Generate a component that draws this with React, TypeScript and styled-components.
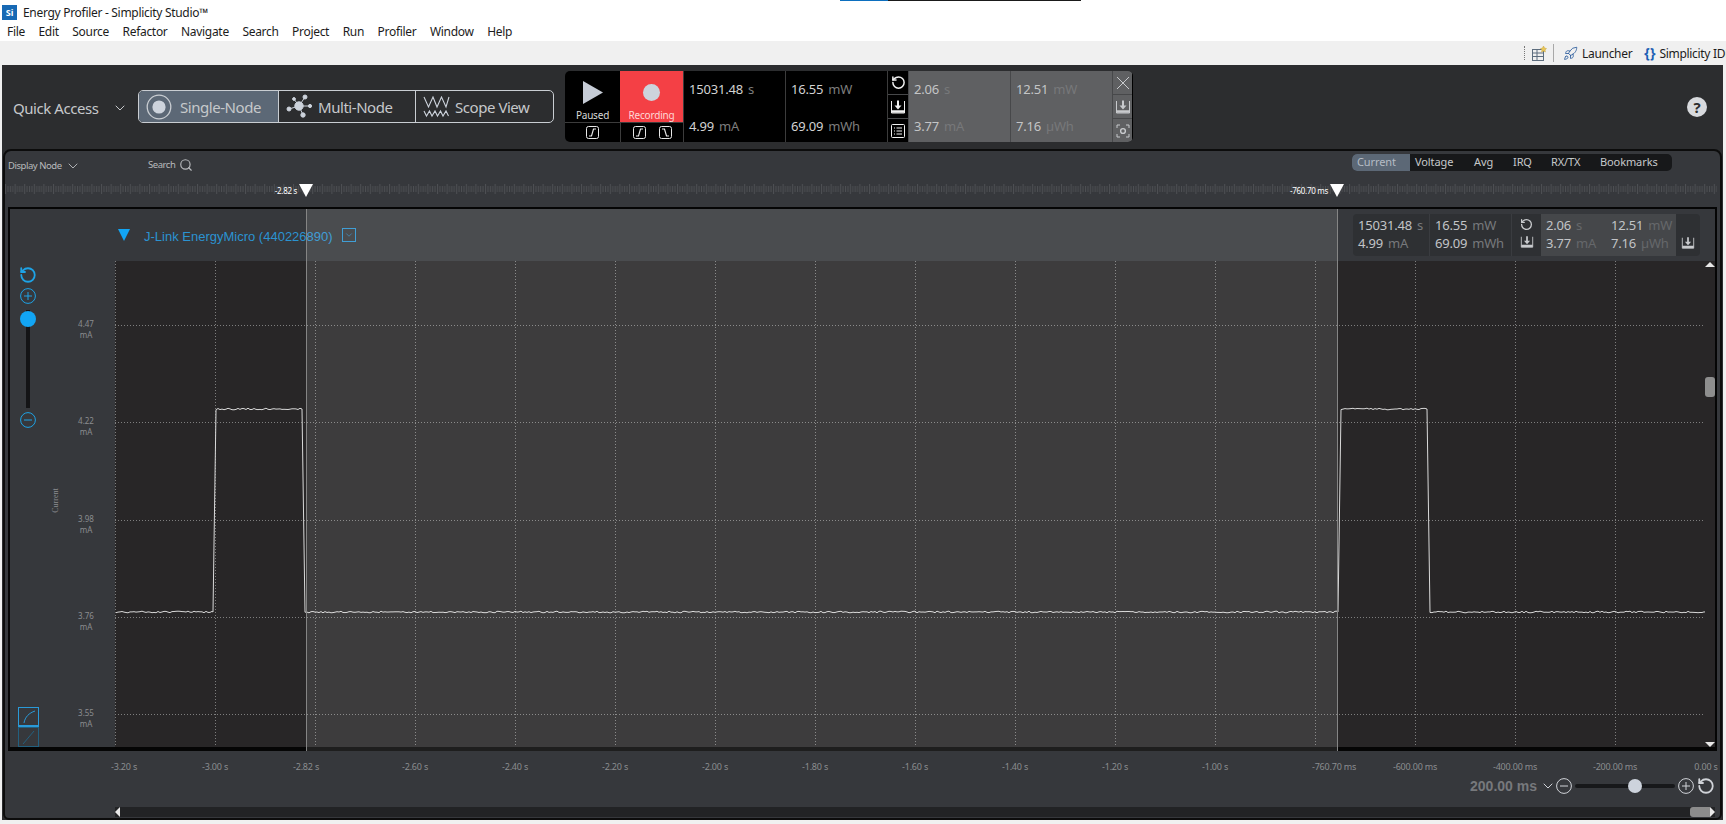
import React from 'react';
import styled, { createGlobalStyle } from 'styled-components';
import { Rocket, RotateCcw, Search, ChevronDown } from 'lucide-react';

const GlobalStyle = createGlobalStyle`
  html, body {
    margin: 0;
    height: 100%;
    overflow: hidden;
    background: #fff;
    font-family: "Noto Sans", "Open Sans", sans-serif;
  }
  * { box-sizing: border-box; }
`;

const Page = styled.div`
  position: relative;
  display: flex;
  flex-direction: column;
  width: 1726px;
  height: 824px;
  background: #f0f0f0;
  overflow: hidden;
`;

const TopStrip = styled.div`
  position: absolute;
  top: 0;
  left: 840px;
  width: 241px;
  height: 1px;
  background: linear-gradient(90deg, #0c6fbf 48px, #1a1a1a 48px);
`;

const TitleBar = styled.div`
  height: 22px;
  background: #fff;
  display: flex;
  align-items: center;
  padding: 2px 0 0 2px;
  gap: 6px;
`;

const AppLogo = styled.div`
  width: 15px;
  height: 15px;
  background: #1769b4;
  color: #fff;
  font-size: 9px;
  font-weight: 700;
  line-height: 15px;
  text-align: center;
`;

const WindowTitle = styled.div`
  font-size: 12px;
  letter-spacing: -0.3px;
  color: #1c1c1c;
`;

const MenuBar = styled.div`
  height: 19px;
  background: #fff;
  display: flex;
  align-items: center;
  gap: 13.5px;
  padding-left: 7px;
`;

const MenuItem = styled.span`
  font-size: 12px;
  letter-spacing: -0.3px;
  color: #1c1c1c;
`;

const ToolBar = styled.div`
  height: 24px;
  display: flex;
  align-items: center;
  background: #f0f0f0;
`;

const ToolGroup = styled.div`
  margin-left: auto;
  flex: 0 0 202px;
  width: 202px;
  display: flex;
  align-items: center;
  overflow: hidden;
  white-space: nowrap;
  font-size: 12px;
  letter-spacing: -0.3px;
  color: #1c1c1c;
  > * { flex: none; }
`;

const Grip = styled.div`
  width: 1px;
  height: 14px;
  margin-right: 7px;
  border-left: 1px dotted #777;
`;

const ToolDivider = styled.div`
  width: 1px;
  height: 18px;
  background: #a8a8a8;
  margin: 0 9px 0 6px;
`;

const ToolLabel = styled.span`
  margin-left: 4px;
`;

const Braces = styled.span`
  color: #1d5fb4;
  font-weight: 700;
  font-size: 14px;
  letter-spacing: 0;
  margin: -2px 4px 0 12px;
`;

const Main = styled.div`
  flex: 1;
  display: flex;
  flex-direction: column;
  margin: 0 3px 4px 2px;
  padding: 0 1px;
  background: #2c2d2f;
  min-height: 0;
`;

const TopBar = styled.div`
  height: 84px;
  flex: none;
  display: flex;
  align-items: center;
  padding: 0 15px 1px 10px;
`;

const QuickAccess = styled.div`
  display: flex;
  align-items: center;
  width: 125px;
  font-size: 15px;
  letter-spacing: -0.45px;
  color: #c6c8cb;
  gap: 14px;
  margin-top: 3px;
  svg { flex: none; }
`;

const ModeSwitch = styled.div`
  display: flex;
  height: 33px;
  border: 1px solid #c9cdd2;
  border-radius: 5px;
  overflow: hidden;
  margin-right: 11px;
`;

const ModeButton = styled.div<{ $active?: boolean; $width: number; $gap: number }>`
  width: ${p => p.$width}px;
  display: flex;
  align-items: center;
  gap: ${p => p.$gap}px;
  padding-left: 7px;
  font-size: 15px;
  letter-spacing: -0.45px;
  color: #c6c8cb;
  background: ${p => (p.$active ? '#5c6876' : 'transparent')};
  & + & { border-left: 1px solid #c9cdd2; }
  svg { flex: none; }
`;

const Meter = styled.div`
  display: flex;
  width: 568px;
  height: 71px;
  background: #000;
  border-radius: 5px;
  overflow: hidden;
`;

const RunGroup = styled.div`
  width: 118px;
  display: flex;
  flex-direction: column;
`;

const RunRow = styled.div`
  display: flex;
  height: 52px;
  border-bottom: 1px solid #3c3c3c;
`;

const RunButton = styled.div<{ $width: number; $on?: boolean }>`
  width: ${p => p.$width}px;
  display: flex;
  flex-direction: column;
  align-items: center;
  padding-top: 10px;
  gap: 4px;
  background: ${p => (p.$on ? '#f44045' : 'transparent')};
  color: ${p => (p.$on ? '#ffd7d7' : '#d8d8d8')};
  font-size: 10px;
  letter-spacing: -0.2px;
  line-height: 14px;
  svg { flex: none; }
`;

const EdgeRow = styled.div`
  flex: 1;
  display: flex;
`;

const EdgeCell = styled.div<{ $width: number }>`
  width: ${p => p.$width}px;
  display: flex;
  align-items: center;
  justify-content: space-around;
  padding: 0 5px;
  color: #e8e8e8;
  & + & { border-left: 1px solid #3c3c3c; }
`;

const StatColumn = styled.div<{ $dim?: boolean }>`
  width: 102px;
  display: flex;
  flex-direction: column;
  justify-content: space-between;
  padding: 9px 0 7px 5px;
  border-left: 1px solid ${p => (p.$dim ? '#47484a' : '#3c3c3c')};
  background: ${p => (p.$dim ? '#5f6062' : 'transparent')};
`;

const StatLine = styled.div`
  font-size: 13px;
  letter-spacing: -0.2px;
  line-height: 18px;
  white-space: nowrap;
`;

const StatValue = styled.span<{ $tone: string }>`
  color: ${p => p.$tone};
`;

const StatUnit = styled.span<{ $tone: string }>`
  color: ${p => p.$tone};
  margin-left: 5px;
`;

const IconColumn = styled.div<{ $width: number; $bg: string; $color: string }>`
  width: ${p => p.$width}px;
  display: flex;
  flex-direction: column;
  background: ${p => p.$bg};
  color: ${p => p.$color};
  border-left: 1px solid ${p => (p.$bg === '#000' ? '#3c3c3c' : '#47484a')};
`;

const IconCell = styled.div`
  flex: 1;
  display: flex;
  align-items: center;
  justify-content: center;
  & + & { border-top: 1px solid #47484a; }
`;

const HelpBadge = styled.div`
  margin-left: auto;
  width: 20px;
  height: 20px;
  border-radius: 50%;
  background: #d8dade;
  color: #2c2d2f;
  font-size: 15px;
  font-weight: 700;
  line-height: 20px;
  text-align: center;
`;

const Panel = styled.div`
  flex: 1;
  min-height: 0;
  display: flex;
  flex-direction: column;
  background: #36383c;
  border: 2px solid #0c0c0c;
  border-radius: 8px 8px 6px 6px;
`;

const PanelHead = styled.div`
  height: 32px;
  flex: none;
  display: flex;
  align-items: flex-start;
  font-size: 9.5px;
  letter-spacing: -0.45px;
  color: #b8babd;
`;

const HeadLabel = styled.div<{ $width: number; $gap: number }>`
  width: ${p => p.$width}px;
  display: flex;
  align-items: center;
  gap: ${p => p.$gap}px;
  padding: 7px 0 0 3px;
  line-height: 14px;
`;

const Tabs = styled.div`
  margin: 3px 48px 0 auto;
  display: flex;
  height: 17px;
  background: #17181a;
  border-radius: 5px;
  overflow: hidden;
`;

const Tab = styled.div<{ $width: number; $active?: boolean }>`
  width: ${p => p.$width}px;
  padding-left: 5px;
  font-size: 11px;
  line-height: 16px;
  letter-spacing: -0.1px;
  color: ${p => (p.$active ? '#b5bcc5' : '#c6c8cb')};
  background: ${p => (p.$active ? '#5c6876' : 'transparent')};
`;

const Ruler = styled.div`
  position: relative;
  height: 14px;
  flex: none;
  margin-right: 3px;
  svg { display: block; }
`;

const MarkerHead = styled.div<{ $x: number }>`
  position: absolute;
  top: 1px;
  left: ${p => p.$x}px;
  width: 0;
  height: 0;
  border-left: 7px solid transparent;
  border-right: 7px solid transparent;
  border-top: 13px solid #fff;
`;

const MarkerLabel = styled.div<{ $right: number }>`
  position: absolute;
  top: 2px;
  right: ${p => p.$right}px;
  font-size: 8px;
  line-height: 11px;
  letter-spacing: -0.3px;
  color: #fff;
`;

const ChartBox = styled.div`
  position: relative;
  flex: none;
  margin: 10px 3px 0;
  height: 544px;
  border: solid #050505;
  border-width: 2px 2px 4px;
  display: flex;
  flex-direction: column;
`;

const Selection = styled.div`
  position: absolute;
  top: 0;
  bottom: -4px;
  left: 296px;
  width: 1032px;
  background: rgba(255, 255, 255, 0.1);
  border: solid #858585;
  border-width: 0 1px;
`;

const ChartHeader = styled.div`
  height: 52px;
  flex: none;
  display: flex;
  align-items: center;
  background: #36383c;
  padding-left: 108px;
`;

const NodeName = styled.div`
  font-family: "Liberation Sans", Arial, sans-serif;
  font-size: 13px;
  color: #2b93d1;
  margin-left: 14px;
  margin-top: 3px;
`;

const NodeMenu = styled.div`
  width: 14px;
  height: 14px;
  margin: 0 0 0 9px;
  border: 1px solid #2b93d1;
  color: #2b93d1;
  display: flex;
  align-items: center;
  justify-content: center;
`;

const MiniReadout = styled.div`
  margin: 0 15px 0 auto;
  width: 347px;
  height: 42px;
  display: flex;
  border-radius: 4px;
  overflow: hidden;
  background: #2e3033;
`;

const MiniColumn = styled.div<{ $width: number; $bg?: string }>`
  width: ${p => p.$width}px;
  padding: 2px 0 0 5px;
  background: ${p => p.$bg ?? 'transparent'};
  border-right: 1px solid ${p => (p.$bg ? 'transparent' : '#3a3c40')};
`;

const MiniIcons = styled.div<{ $width: number; $alignEnd?: boolean }>`
  width: ${p => p.$width}px;
  display: flex;
  flex-direction: column;
  align-items: center;
  justify-content: ${p => (p.$alignEnd ? 'flex-end' : 'flex-start')};
  gap: 4px;
  padding: 4px 0 6px;
  color: #c8cacd;
`;

const ChartBody = styled.div`
  flex: 1;
  display: flex;
  min-height: 0;
`;

const Rail = styled.div`
  width: 105px;
  flex: none;
  display: flex;
  background: #36383c;
`;

const RailControls = styled.div`
  width: 36px;
  display: flex;
  flex-direction: column;
  align-items: center;
  gap: 4px;
  padding-top: 5px;
  color: #1ea3e6;
`;

const VerticalTrack = styled.div`
  position: relative;
  width: 4px;
  height: 98px;
  margin-top: 2px;
  background: #141416;
`;

const VerticalThumb = styled.div`
  position: absolute;
  top: 1px;
  left: -6px;
  width: 16px;
  height: 16px;
  border-radius: 50%;
  background: #12a5f4;
`;

const CurveButtons = styled.div`
  margin-top: auto;
  display: flex;
  flex-direction: column;
`;

const CurveButton = styled.div<{ $active?: boolean }>`
  width: 21px;
  height: 20px;
  border: 1px solid ${p => (p.$active ? '#2a9ad8' : '#23607f')};
  border-bottom-width: ${p => (p.$active ? 2 : 1)}px;
  color: ${p => (p.$active ? '#2a9ad8' : '#23607f')};
  display: flex;
`;

const YAxis = styled.div`
  position: relative;
  flex: 1;
`;

const YLabel = styled.div`
  position: absolute;
  left: 22px;
  width: 36px;
  font-size: 8px;
  line-height: 11px;
  text-align: center;
  color: #8b8d90;
`;

const YTitle = styled.div`
  position: absolute;
  left: -3px;
  top: 235px;
  font-family: "Liberation Serif", serif;
  font-size: 8px;
  color: #8b8d90;
  transform: rotate(-90deg);
`;

const Plot = styled.svg`
  display: block;
  flex: 1;
  background: #282627;
`;

const ScrollThumb = styled.div`
  position: absolute;
  top: 116px;
  right: 0;
  width: 10px;
  height: 20px;
  border-radius: 3px;
  background: #8e8e8e;
`;

const PlotWrap = styled.div`
  position: relative;
  flex: 1;
  display: flex;
  min-width: 0;
`;

const ScrollArrow = styled.div<{ $down?: boolean }>`
  position: absolute;
  right: 0;
  ${p => (p.$down ? 'bottom: 0;' : 'top: 1px;')}
  width: 0;
  height: 0;
  border-left: 5px solid transparent;
  border-right: 5px solid transparent;
  ${p => (p.$down ? 'border-top: 5px solid #e8e8e8;' : 'border-bottom: 5px solid #e8e8e8;')}
`;

const XAxis = styled.div`
  position: relative;
  height: 24px;
  flex: none;
`;

const XLabel = styled.div`
  position: absolute;
  top: 10px;
  font-size: 9px;
  line-height: 12px;
  letter-spacing: -0.2px;
  color: #8b8d90;
  white-space: nowrap;
  transform: translateX(-50%);
`;

const ZoomRow = styled.div`
  height: 22px;
  flex: none;
  display: flex;
  align-items: center;
  justify-content: flex-end;
  gap: 3px;
  padding-right: 5px;
  color: #d0d3d8;
  svg { flex: none; }
  > svg:nth-child(2) { margin-right: -3px; }
`;

const ZoomValue = styled.div`
  font-family: "Liberation Sans", Arial, sans-serif;
  font-size: 14px;
  font-weight: 700;
  color: #77797c;
`;

const ZoomTrack = styled.div`
  position: relative;
  width: 100px;
  height: 4px;
  border-radius: 2px;
  background: #17181a;
`;

const ZoomThumb = styled.div`
  position: absolute;
  top: -5px;
  left: 53px;
  width: 14px;
  height: 14px;
  border-radius: 50%;
  background: #cdd3dc;
`;

const HScroll = styled.div`
  position: relative;
  height: 10px;
  flex: none;
  margin: 10px 5px 0 110px;
  background: #222325;
`;

const HArrow = styled.div<{ $right?: boolean }>`
  position: absolute;
  top: 0;
  ${p => (p.$right ? 'right: 0;' : 'left: 0;')}
  width: 0;
  height: 0;
  border-top: 5px solid transparent;
  border-bottom: 5px solid transparent;
  ${p => (p.$right ? 'border-left: 5px solid #e8e8e8;' : 'border-right: 5px solid #e8e8e8;')}
`;

const HThumb = styled.div`
  position: absolute;
  top: 0;
  right: 5px;
  width: 20px;
  height: 10px;
  border-radius: 3px 0 0 3px;
  background: #8c8c8c;
`;

// --- little drawings

const SaveIcon = ({ size = 16 }: { size?: number }) => (
  <svg width={size} height={size} viewBox="0 0 16 16" fill="none" stroke="currentColor">
    <path d="M1.500 2v12h13V2" />
    <path d="M1.500 12.500h13" strokeWidth="2.500" />
    <path d="M8 1.500V7" strokeWidth="2" />
    <path d="M4.500 6.500h7L8 10.500z" fill="currentColor" stroke="none" />
  </svg>
);

const ListIcon = () => (
  <svg width="16" height="16" viewBox="0 0 16 16" fill="none" stroke="currentColor">
    <rect x="1.500" y="1.500" width="13" height="13" rx="1" />
    <path d="M4 5h1M6.500 5H12M4 8h1M6.500 8H12M4 11h1M6.500 11H12" />
  </svg>
);

const CloseIcon = () => (
  <svg width="16" height="16" viewBox="0 0 16 16" fill="none" stroke="currentColor">
    <path d="m2 2 12 12M14 2 2 14" />
  </svg>
);

const CaptureIcon = () => (
  <svg width="14" height="14" viewBox="0 0 14 14" fill="none" stroke="currentColor">
    <path d="M1 4V1h3M10 1h3v3M13 10v3h-3M4 13H1v-3" />
    <circle cx="7" cy="7" r="2.400" strokeWidth="1.400" />
  </svg>
);

const EdgeIcon = ({ falling }: { falling?: boolean }) => (
  <svg width="13" height="13" viewBox="0 0 13 13" fill="none" stroke="currentColor">
    <rect x="0.500" y="0.500" width="12" height="12" rx="2" />
    <path d={falling ? 'M3 3h2.500l2 7H10' : 'M3 10h2.500l2-7H10'} strokeWidth="1.200" />
  </svg>
);

const CircleSign = ({ plus, size = 16 }: { plus?: boolean; size?: number }) => (
  <svg width={size} height={size} viewBox="0 0 16 16" fill="none" stroke="currentColor">
    <circle cx="8" cy="8" r="7.400" />
    <path d={plus ? 'M4 8h8M8 4v8' : 'M4 8h8'} />
  </svg>
);

const NodeRing = () => (
  <svg width="26" height="26" viewBox="0 0 26 26">
    <circle cx="13" cy="13" r="11.800" fill="none" stroke="#c9cdd2" strokeWidth="1.300" />
    <circle cx="13" cy="13" r="6.600" fill="#cdd3dc" />
  </svg>
);

const MultiNode = () => (
  <svg width="27" height="27" viewBox="0 0 27 27" fill="#cdd3dc" stroke="#cdd3dc">
    <path d="M13 13 19 4M13 13 3 16M13 13l11 0M13 13l4 9M13 13 8 6" />
    <circle cx="13" cy="13" r="4.200" />
    <circle cx="19" cy="4" r="2" />
    <circle cx="3" cy="16" r="2" />
    <circle cx="24" cy="13" r="1.600" />
    <circle cx="17" cy="22" r="2.200" />
    <circle cx="8" cy="6" r="1.400" />
  </svg>
);

const ScopeWave = () => (
  <svg width="27" height="22" viewBox="0 0 27 22" fill="none" stroke="#cdd3dc" strokeWidth="1.100">
    <path d="M1 1l4.500 10L10 1l4 10 4.500-10 4.500 10L26 1" />
    <path d="M1 15l2.500 5 3-5 2.500 5 3-5 2.500 5 3-5 2.500 5 3-5 2.500 5" />
  </svg>
);

const TableIcon = () => (
  <svg width="15" height="15" viewBox="0 0 15 15" fill="none" stroke="#5d6d7e">
    <rect x="0.500" y="3.500" width="11" height="11" />
    <path d="M0.500 7h11M0.500 10.500h11M5 3.500v11" />
    <path d="m11.500 0 1 2 2 .6-1.500 1.400.4 2-1.900-1-1.900 1 .4-2L8.500 2.600l2-.6z" fill="#e8c65a" stroke="#c9a53a" strokeWidth=".5" />
  </svg>
);

const CurveIcon = ({ curved }: { curved?: boolean }) => (
  <svg width="19" height="18" viewBox="0 0 19 18" fill="none" stroke="currentColor">
    <path d={curved ? 'M5 15C6 9 10 5 16 3' : 'M4 16 15 3'} />
  </svg>
);

// --- chart data

const MENU = ['File', 'Edit', 'Source', 'Refactor', 'Navigate', 'Search', 'Project', 'Run', 'Profiler', 'Window', 'Help'];

const TABS = [
  { label: 'Current', width: 58, active: true },
  { label: 'Voltage', width: 59 },
  { label: 'Avg', width: 39 },
  { label: 'IRQ', width: 38 },
  { label: 'RX/TX', width: 49 },
  { label: 'Bookmarks', width: 77 },
];

const Y_LABELS = [
  { value: '4.47', y: 64 },
  { value: '4.22', y: 161 },
  { value: '3.98', y: 259 },
  { value: '3.76', y: 356 },
  { value: '3.55', y: 453 },
];

const X_LABELS = [
  { label: '-3.20 s', x: 119 },
  { label: '-3.00 s', x: 210 },
  { label: '-2.82 s', x: 301 },
  ...['-2.60', '-2.40', '-2.20', '-2.00', '-1.80', '-1.60', '-1.40', '-1.20', '-1.00'].map((label, i) => ({
    label: `${label} s`,
    x: 410 + i * 100,
  })),
  { label: '-760.70 ms', x: 1329 },
  { label: '-600.00 ms', x: 1410 },
  { label: '-400.00 ms', x: 1510 },
  { label: '-200.00 ms', x: 1610 },
  { label: '0.00 s', x: 1701 },
];

const noise = (i: number) => {
  const s = Math.sin(i * 12.9898) * 43758.5453;
  return (s - Math.floor(s) - 0.5) * 1.6;
};

const traceRun = (from: number, to: number, level: number) => {
  const pts: string[] = [];
  for (let x = from; x < to; x += 2) {
    pts.push(`${x},${(level + noise(x)).toFixed(1)}`);
  }
  pts.push(`${to},${level}`);
  return pts.join(' ');
};

const LOW = 351;
const HIGH = 148;
const TRACE = [
  traceRun(1, 98, LOW),
  traceRun(101, 187, HIGH),
  traceRun(190, 1223, LOW),
  traceRun(1226, 1312, HIGH),
  traceRun(1315, 1590, LOW),
].join(' ');

const Stat = ({ value, unit, dim }: { value: string; unit: string; dim?: boolean }) => (
  <StatLine>
    <StatValue $tone={dim ? '#c4c5c6' : '#d2d2d2'}>{value}</StatValue>
    <StatUnit $tone={dim ? '#77787a' : '#7d7d7d'}>{unit}</StatUnit>
  </StatLine>
);

const MiniStat = ({ value, unit, dim }: { value: string; unit: string; dim?: boolean }) => (
  <StatLine>
    <StatValue $tone="#c2c4c7">{value}</StatValue>
    <StatUnit $tone={dim ? '#66686b' : '#77797c'}>{unit}</StatUnit>
  </StatLine>
);

const App = () => {
  return (
    <Page>
      <GlobalStyle />
      <TopStrip />
      <TitleBar>
        <AppLogo>Si</AppLogo>
        <WindowTitle>Energy Profiler - Simplicity Studio™</WindowTitle>
      </TitleBar>
      <MenuBar>
        {MENU.map(item => (
          <MenuItem key={item}>{item}</MenuItem>
        ))}
      </MenuBar>
      <ToolBar>
        <ToolGroup>
          <Grip />
          <TableIcon />
          <ToolDivider />
          <Rocket size={15} color="#2f5f9e" strokeWidth={1.4} />
          <ToolLabel>Launcher</ToolLabel>
          <Braces>{'{}'}</Braces>
          <span>Simplicity IDE</span>
        </ToolGroup>
      </ToolBar>

      <Main>
        <TopBar>
          <QuickAccess>
            Quick Access
            <ChevronDown size={16} strokeWidth={1.5} />
          </QuickAccess>
          <ModeSwitch>
            <ModeButton $active $width={139} $gap={8}>
              <NodeRing />
              Single-Node
            </ModeButton>
            <ModeButton $width={137} $gap={5}>
              <MultiNode />
              Multi-Node
            </ModeButton>
            <ModeButton $width={138} $gap={5}>
              <ScopeWave />
              Scope View
            </ModeButton>
          </ModeSwitch>

          <Meter>
            <RunGroup>
              <RunRow>
                <RunButton $width={55}>
                  <svg width="20" height="23" viewBox="0 0 20 23">
                    <path d="M0 0 20 11.500 0 23z" fill="#c6ccd6" />
                  </svg>
                  Paused
                </RunButton>
                <RunButton $width={63} $on>
                  <svg width="23" height="23" viewBox="0 0 23 23">
                    <circle cx="11.500" cy="11.500" r="8.500" fill="#cdd3dc" />
                  </svg>
                  Recording
                </RunButton>
              </RunRow>
              <EdgeRow>
                <EdgeCell $width={55}>
                  <EdgeIcon />
                </EdgeCell>
                <EdgeCell $width={63}>
                  <EdgeIcon />
                  <EdgeIcon falling />
                </EdgeCell>
              </EdgeRow>
            </RunGroup>
            <StatColumn>
              <Stat value="15031.48" unit="s" />
              <Stat value="4.99" unit="mA" />
            </StatColumn>
            <StatColumn>
              <Stat value="16.55" unit="mW" />
              <Stat value="69.09" unit="mWh" />
            </StatColumn>
            <IconColumn $width={21} $bg="#000" $color="#f0f0f0">
              <IconCell>
                <RotateCcw size={15} strokeWidth={2.4} />
              </IconCell>
              <IconCell>
                <SaveIcon />
              </IconCell>
              <IconCell>
                <ListIcon />
              </IconCell>
            </IconColumn>
            <StatColumn $dim>
              <Stat dim value="2.06" unit="s" />
              <Stat dim value="3.77" unit="mA" />
            </StatColumn>
            <StatColumn $dim>
              <Stat dim value="12.51" unit="mW" />
              <Stat dim value="7.16" unit="µWh" />
            </StatColumn>
            <IconColumn $width={20} $bg="#5f6062" $color="#c8cacd">
              <IconCell>
                <CloseIcon />
              </IconCell>
              <IconCell>
                <SaveIcon />
              </IconCell>
              <IconCell>
                <CaptureIcon />
              </IconCell>
            </IconColumn>
          </Meter>
          <HelpBadge>?</HelpBadge>
        </TopBar>

        <Panel>
          <PanelHead>
            <HeadLabel $width={140} $gap={3}>
              Display Node
              <ChevronDown size={16} strokeWidth={1.4} />
            </HeadLabel>
            <HeadLabel $width={80} $gap={4}>
              Search
              <Search size={14} strokeWidth={2} />
            </HeadLabel>
            <Tabs>
              {TABS.map(t => (
                <Tab key={t.label} $width={t.width} $active={t.active}>
                  {t.label}
                </Tab>
              ))}
            </Tabs>
          </PanelHead>

          <Ruler>
            <svg width="100%" height="14">
              <defs>
                <pattern id="ticks" width="9.6" height="14" patternUnits="userSpaceOnUse">
                  <path d="M0.500 1v10M2.900 3v6M5.300 3v6M7.700 3v6" stroke="#4d4f53" />
                </pattern>
              </defs>
              <rect width="100%" height="14" fill="url(#ticks)" />
            </svg>
            <MarkerLabel $right={1420}>-2.82 s</MarkerLabel>
            <MarkerHead $x={294} />
            <MarkerLabel $right={389}>-760.70 ms</MarkerLabel>
            <MarkerHead $x={1325} />
          </Ruler>

          <ChartBox>
            <ChartHeader>
              <svg width="12" height="12" viewBox="0 0 12 12">
                <path d="M0 0h12L6 12z" fill="#12a5f4" />
              </svg>
              <NodeName>J-Link EnergyMicro (440226890)</NodeName>
              <NodeMenu>
                <ChevronDown size={10} strokeWidth={1.5} />
              </NodeMenu>
              <MiniReadout>
                <MiniColumn $width={77}>
                  <MiniStat value="15031.48" unit="s" />
                  <MiniStat value="4.99" unit="mA" />
                </MiniColumn>
                <MiniColumn $width={82}>
                  <MiniStat value="16.55" unit="mW" />
                  <MiniStat value="69.09" unit="mWh" />
                </MiniColumn>
                <MiniIcons $width={29}>
                  <RotateCcw size={13} strokeWidth={2.4} />
                  <SaveIcon size={14} />
                </MiniIcons>
                <MiniColumn $width={65} $bg="#45474a">
                  <MiniStat dim value="2.06" unit="s" />
                  <MiniStat dim value="3.77" unit="mA" />
                </MiniColumn>
                <MiniColumn $width={70} $bg="#45474a">
                  <MiniStat dim value="12.51" unit="mW" />
                  <MiniStat dim value="7.16" unit="µWh" />
                </MiniColumn>
                <MiniIcons $width={24} $alignEnd>
                  <SaveIcon size={14} />
                </MiniIcons>
              </MiniReadout>
            </ChartHeader>

            <ChartBody>
              <Rail>
                <RailControls>
                  <RotateCcw size={18} strokeWidth={2.4} />
                  <CircleSign plus />
                  <VerticalTrack>
                    <VerticalThumb />
                  </VerticalTrack>
                  <CircleSign />
                  <CurveButtons>
                    <CurveButton $active>
                      <CurveIcon curved />
                    </CurveButton>
                    <CurveButton>
                      <CurveIcon />
                    </CurveButton>
                  </CurveButtons>
                </RailControls>
                <YAxis>
                  <YTitle>Current</YTitle>
                  {Y_LABELS.map(l => (
                    <YLabel key={l.value} style={{ top: l.y - 7 }}>
                      {l.value}
                      <br />
                      mA
                    </YLabel>
                  ))}
                </YAxis>
              </Rail>
              <PlotWrap>
                <Plot viewBox="0 0 1600 486" width="1600" height="486" shapeRendering="crispEdges">
                  {[0, 1, 2, 3, 4, 5, 6, 7, 8, 9, 10, 11, 12, 13, 14, 15].map(i => (
                    <line key={i} x1={i * 100 + 0.5} x2={i * 100 + 0.5} y1="0" y2="486" stroke="#7e7e7e" strokeDasharray="1 2" />
                  ))}
                  {Y_LABELS.map(l => (
                    <line key={l.y} x1="0" x2="1588" y1={l.y + 0.5} y2={l.y + 0.5} stroke="#7e7e7e" strokeDasharray="1 2" />
                  ))}
                  <polyline points={TRACE} fill="none" stroke="#d9d9d9" strokeWidth="1" shapeRendering="auto" />
                </Plot>
                <ScrollArrow />
                <ScrollThumb />
                <ScrollArrow $down />
              </PlotWrap>
            </ChartBody>
            <Selection />
          </ChartBox>

          <XAxis>
            {X_LABELS.map(l => (
              <XLabel key={l.label} style={{ left: l.x }}>
                {l.label}
              </XLabel>
            ))}
          </XAxis>

          <ZoomRow>
            <ZoomValue>200.00 ms</ZoomValue>
            <ChevronDown size={16} strokeWidth={1.5} />
            <CircleSign />
            <ZoomTrack>
              <ZoomThumb />
            </ZoomTrack>
            <CircleSign plus />
            <RotateCcw size={18} strokeWidth={2.4} />
          </ZoomRow>

          <HScroll>
            <HArrow />
            <HThumb />
            <HArrow $right />
          </HScroll>
        </Panel>
      </Main>
    </Page>
  );
};

export default App;
